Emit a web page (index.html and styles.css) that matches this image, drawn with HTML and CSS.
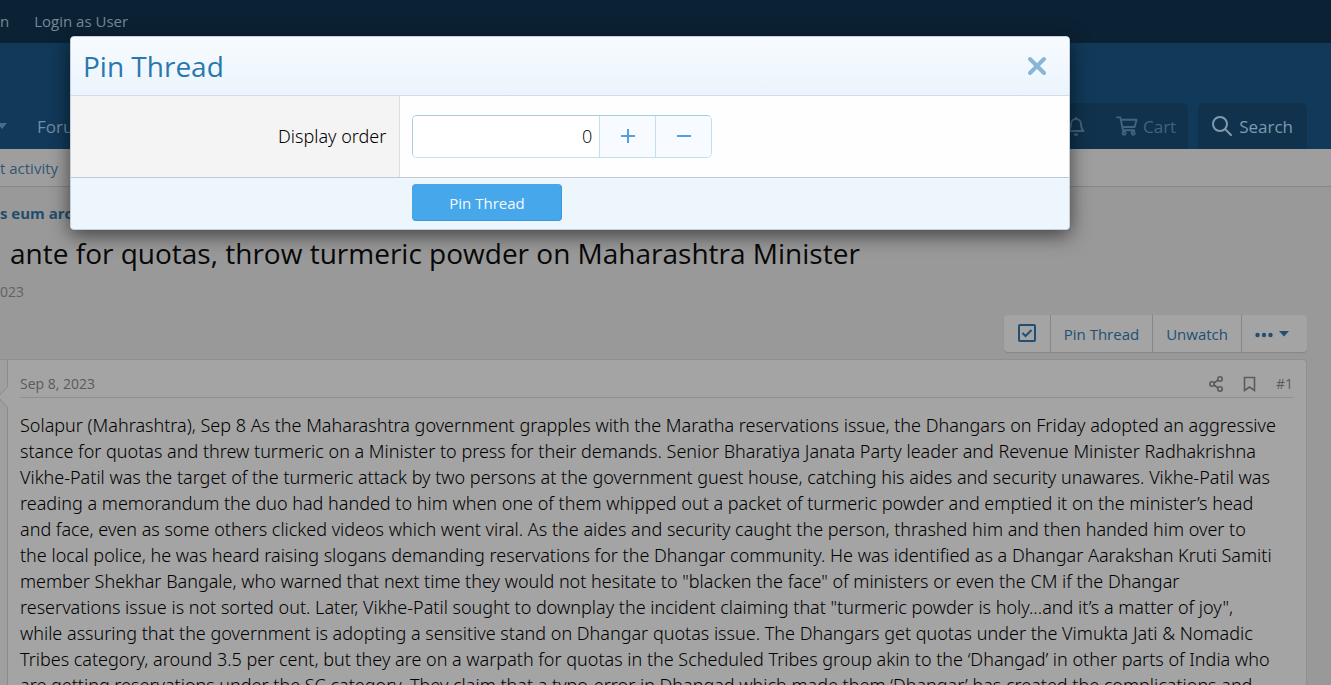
FILE: index.html
```html
<!DOCTYPE html>
<html lang="en">
<head>
<meta charset="utf-8">
<title>Pin Thread</title>
<link rel="stylesheet" href="styles.css">
</head>
<body>
<div class="page">
  <nav class="staff-bar"><a href="#">n</a><a href="#">Login as User</a></nav>
  <header class="header">
    <nav class="main-nav">
      <span class="caret"></span>
      <a href="#">Forums</a>
    </nav>
    <div class="visitor">
      <div class="tab-group">
        <a class="tab tab-bell" href="#" aria-label="Alerts">
          <svg width="18" height="20" viewBox="0 0 18 20" fill="none" stroke="currentColor" stroke-width="2" stroke-linejoin="round"><path d="M9 1v2M1.500 15h15c-1.500-1.500-2.500-3-2.500-7 0-3-2.200-5-5-5S4 5 4 8c0 4-1 5.500-2.500 7z"/><path d="M6.500 17.500h5a2.500 2.500 0 0 1-5 0z" fill="currentColor" stroke="none"/></svg>
        </a>
        <a class="tab tab-cart" href="#">
          <svg width="22" height="20" viewBox="0 0 23 20" fill="none" stroke="currentColor" stroke-width="2" stroke-linejoin="round" stroke-linecap="round"><path d="M1 1h3.500l2.800 13.500H19M5 3.500h16.500L19.500 11H6.500"/><circle cx="8.500" cy="17.500" r="1.600"/><circle cx="18" cy="17.500" r="1.600"/></svg>
          <span>Cart</span>
        </a>
      </div>
      <a class="tab tab-search" href="#">
        <svg width="20" height="20" viewBox="0 0 20 20" fill="none" stroke="currentColor" stroke-width="2" stroke-linecap="round"><circle cx="8" cy="8" r="7"/><path d="M13 13l6 6"/></svg>
        <span>Search</span>
      </a>
    </div>
  </header>
  <nav class="sub-nav"><a href="#">t activity</a></nav>
  <main>
    <a class="crumb" href="#">s eum architecto</a>
    <h1 class="title">ante for quotas, throw turmeric powder on Maharashtra Minister</h1>
    <div class="thread-date">023</div>
    <div class="actions">
      <div class="button-group">
        <button type="button" aria-label="Select"><svg width="20" height="20" viewBox="0 0 20 20" fill="none" stroke="currentColor" stroke-width="2"><rect x="2" y="1" width="16" height="16" rx="1"/><path d="M5.500 9l3 3 6-6"/></svg></button>
        <button type="button">Pin Thread</button>
        <button type="button">Unwatch</button>
        <button type="button" aria-label="More options"><svg width="34" height="10" viewBox="0 0 34 10" fill="currentColor"><circle cx="2.500" cy="6" r="2.200"/><circle cx="9" cy="6" r="2.200"/><circle cx="15.500" cy="6" r="2.200"/><path d="M24 2h10l-5 5.500z"/></svg></button>
      </div>
    </div>
    <article class="post">
      <div class="post-user"><svg class="arrow" width="9" height="22" viewBox="0 0 9 22"><path d="M8 0L-2 11 8 22z" fill="#a4a4a4"/><path d="M8 0L-2 11 8 22" fill="none" stroke="#8b8b8b"/></svg></div>
      <div class="post-main">
        <div class="post-meta">
          <time>Sep 8, 2023</time>
          <div class="post-tools">
            <a href="#" aria-label="Share"><svg width="14" height="16" viewBox="0 0 14 16" fill="none" stroke="currentColor" stroke-width="1.600"><circle cx="3" cy="8" r="2.200"/><circle cx="11" cy="3" r="2.200"/><circle cx="11" cy="13" r="2.200"/><path d="M5 7l4-3M5 9l4 3"/></svg></a>
            <a href="#" aria-label="Bookmark"><svg width="13" height="16" viewBox="0 0 13 16" fill="none" stroke="currentColor" stroke-width="1.600"><path d="M1.500 1.500h10v13l-5-3.500-5 3.500z"/></svg></a>
            <a href="#">#1</a>
          </div>
        </div>
        <p class="post-text">Solapur (Mahrashtra), Sep 8 As the Maharashtra government grapples with the Maratha reservations issue, the Dhangars on Friday adopted an aggressive<br>
stance for quotas and threw turmeric on a Minister to press for their demands. Senior Bharatiya Janata Party leader and Revenue Minister Radhakrishna<br>
Vikhe-Patil was the target of the turmeric attack by two persons at the government guest house, catching his aides and security unawares. Vikhe-Patil was<br>
reading a memorandum the duo had handed to him when one of them whipped out a packet of turmeric powder and emptied it on the minister’s head<br>
and face, even as some others clicked videos which went viral. As the aides and security caught the person, thrashed him and then handed him over to<br>
the local police, he was heard raising slogans demanding reservations for the Dhangar community. He was identified as a Dhangar Aarakshan Kruti Samiti<br>
member Shekhar Bangale, who warned that next time they would not hesitate to "blacken the face" of ministers or even the CM if the Dhangar<br>
reservations issue is not sorted out. Later, Vikhe-Patil sought to downplay the incident claiming that "turmeric powder is holy...and it’s a matter of joy",<br>
while assuring that the government is adopting a sensitive stand on Dhangar quotas issue. The Dhangars get quotas under the Vimukta Jati &amp; Nomadic<br>
Tribes category, around 3.5 per cent, but they are on a warpath for quotas in the Scheduled Tribes group akin to the ‘Dhangad’ in other parts of India who<br>
are getting reservations under the SC category. They claim that a typo-error in Dhangad which made them ‘Dhangar’ has created the complications and</p>
      </div>
    </article>
  </main>
</div>
<form class="dialog" role="dialog" aria-labelledby="dialog-title">
  <div class="dialog-head">
    <h2 id="dialog-title">Pin Thread</h2>
    <button type="button" class="close" aria-label="Close"><svg width="20" height="20" viewBox="0 0 20 20" fill="none" stroke="currentColor" stroke-width="4" stroke-linecap="round"><path d="M3 3l14 14M17 3L3 17"/></svg></button>
  </div>
  <div class="row">
    <label class="row-label" for="order">Display order</label>
    <div class="row-field">
      <div class="stepper">
        <input id="order" type="text" inputmode="numeric" value="0">
        <button type="button" aria-label="Increase"><svg width="16" height="16" viewBox="0 0 16 16" stroke="currentColor" stroke-width="2"><path d="M1 7h14M8 0v14"/></svg></button>
        <button type="button" aria-label="Decrease"><svg width="16" height="16" viewBox="0 0 16 16" stroke="currentColor" stroke-width="2"><path d="M1 7h14"/></svg></button>
      </div>
    </div>
  </div>
  <div class="dialog-foot"><button type="submit" class="primary">Pin Thread</button></div>
</form>
</body>
</html>
```
FILE: styles.css
```css
* { box-sizing: border-box; }
body {
  margin: 0;
  background: #999;
  font-family: "Open Sans", "Noto Sans", sans-serif;
  font-size: 15px;
  color: #080808;
}
a { color: inherit; text-decoration: none; }
button, input { font: inherit; margin: 0; }
svg { display: block; flex: none; }
.page { height: 100vh; overflow: hidden; }
.staff-bar {
  display: flex;
  align-items: center;
  gap: 25px;
  height: 43px;
  padding-bottom: 2px;
  background: #0b2234;
  color: #74899a;
}
.header {
  display: flex;
  justify-content: space-between;
  align-items: flex-end;
  height: 106px;
  padding-right: 24px;
  background: #113959;
  color: #6f8da5;
  font-size: 17px;
}
.main-nav { display: flex; align-items: center; gap: 30px; height: 46px; }
.caret {
  width: 7px;
  height: 6px;
  background: #4a6c87;
  clip-path: polygon(0 0, 100% 0, 30% 100%, 0 60%);
}
.visitor { display: flex; gap: 10px; }
.tab-group, .tab-search { background: #10324d; border-radius: 6px 6px 0 0; }
.tab-group { display: flex; color: #43637d; }
.tab {
  display: flex;
  align-items: center;
  gap: 6px;
  height: 46px;
  padding: 0 12px;
}
.tab-bell { padding-right: 19px; }
.tab-cart { gap: 5px; }
.tab-search { gap: 7px; padding: 0 14px; color: #7f9aae; }
.sub-nav {
  display: flex;
  align-items: center;
  height: 38px;
  background: #9e9e9e;
  border-bottom: 1px solid #868686;
  color: #335574;
}
.crumb {
  display: block;
  padding-top: 15px;
  line-height: 22px;
  font-weight: 700;
  font-size: 15px;
  color: #214c6d;
}
.title {
  margin: 10px 0 0 10px;
  font-size: 28px;
  line-height: 38px;
  font-weight: 400;
  white-space: nowrap;
}
.thread-date { margin-top: 9px; line-height: 22px; font-size: 14px; color: #626262; }
.actions { display: flex; justify-content: flex-end; padding: 12px 24px 0 0; }
.button-group {
  display: flex;
  height: 37px;
  background: #a4a4a4;
  border-radius: 4px;
  box-shadow: 0 1px 1px #858585;
}
.button-group button {
  display: flex;
  align-items: center;
  padding: 0 13px;
  border: 0;
  border-right: 1px solid #878787;
  background: none;
  color: #214f73;
}
.button-group button:last-child { border-right: 0; padding: 0 18px 0 13px; }
.post {
  display: flex;
  margin: 7px 24px 0 0;
  border: 1px solid #909090;
  border-left: 0;
  border-radius: 0 4px 0 0;
  background: #a4a4a4;
}
.post-user {
  position: relative;
  flex: none;
  width: 8px;
  border-right: 1px solid #8b8b8b;
  background: #9f9f9f;
}
.arrow { position: absolute; left: 0; top: 26px; }
.post-main { flex: 1; min-width: 0; padding: 10px 13px 0 12px; }
.post-meta {
  display: flex;
  justify-content: space-between;
  align-items: center;
  height: 28px;
  border-bottom: 1px solid #8f8f8f;
  font-size: 14px;
  color: #5b5b5b;
}
.post-tools { display: flex; align-items: center; gap: 20px; }
.post-text {
  margin: 14px 0 0;
  font-family: "Noto Sans", "Open Sans", sans-serif;
  font-size: 18px;
  font-weight: 300;
  line-height: 26px;
  white-space: nowrap;
  color: #000;
}
.dialog {
  position: absolute;
  left: 70px;
  right: 261px;
  top: 36px;
  border: 1px solid #c5d0db;
  border-radius: 4px;
  background: #fefefe;
  box-shadow: 0 5px 20px rgba(0, 0, 0, .6);
  overflow: hidden;
}
.dialog-head {
  display: flex;
  align-items: center;
  justify-content: space-between;
  height: 59px;
  padding: 0 22px 0 12px;
  background: linear-gradient(#f7fbff, #ebf4fd);
  border-bottom: 1px solid #d3dce8;
}
.dialog-head h2 { margin: 0; font-size: 28px; font-weight: 400; color: #2878ae; }
.close { padding: 0; border: 0; background: none; color: #8ab5d5; }
.row { display: flex; border-bottom: 1px solid #c3c9d0; }
.row-label {
  display: flex;
  align-items: center;
  justify-content: flex-end;
  width: 33%;
  padding: 0 13px 2px 0;
  border-right: 1px solid #dedede;
  background: #f4f4f4;
  font-family: "Noto Sans", "Open Sans", sans-serif;
  font-size: 18px;
  font-weight: 300;
  color: #000;
}
.row-field { flex: 1; padding: 19px 12px; }
.stepper {
  display: flex;
  width: 300px;
  height: 43px;
  border: 1px solid #c4e0ee;
  border-top-color: #a5cde2;
  border-left-color: #a5cde2;
  border-radius: 5px;
  overflow: hidden;
}
.stepper input {
  flex: 1;
  min-width: 0;
  padding: 0 7px 2px 8px;
  border: 0;
  background: #fff;
  font-size: 18px;
  font-weight: 300;
  text-align: right;
  color: #000;
}
.stepper button {
  display: flex;
  align-items: center;
  justify-content: center;
  width: 56px;
  padding: 0;
  border: 0;
  border-left: 1px solid #c4e0ee;
  background: #f7fbff;
  color: #559ddb;
}
.dialog-foot { padding: 6px 0 8px 341px; background: #edf5fd; }
.primary {
  display: block;
  width: 150px;
  height: 37px;
  border: 1px solid #47a7eb;
  border-bottom-color: #3a97d8;
  border-right-color: #3a97d8;
  border-radius: 4px;
  background: #47a7eb;
  color: #f4faff;
}
```
